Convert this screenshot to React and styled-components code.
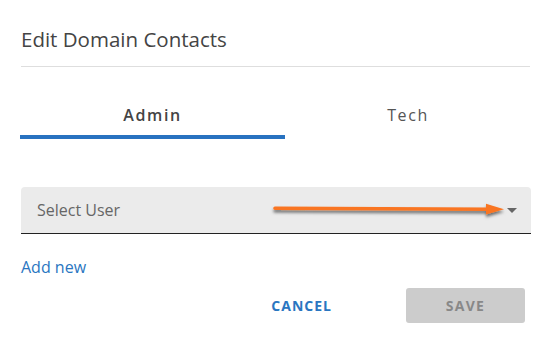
import styled, { createGlobalStyle } from 'styled-components';
import { useState } from 'react';

const GlobalStyle = createGlobalStyle`
  body {
    margin: 0;
    background: #fff;
    font-family: "Open Sans", "Noto Sans", sans-serif;
  }
`;

const tabs = ['Admin', 'Tech'];

function App() {
  const [active, setActive] = useState('Admin');

  return (
    <DIV>
      <GlobalStyle />

      <Title>Edit Domain Contacts</Title>

      <TabRow>
        {tabs.map(tab => (
          <Tab key={tab} $active={tab === active} onClick={() => setActive(tab)}>
            {tab}
          </Tab>
        ))}
      </TabRow>

      <SelectWrap>
        <SelectBox>
          <span>Select User</span>
          <Caret />
        </SelectBox>

        {/* orange annotation arrow drawn over the field */}
        <Pointer width="240" height="16" viewBox="0 0 240 16">
          <defs>
            <filter id="arrow-shadow" x="-5%" y="-80%" width="110%" height="300%">
              <feDropShadow dx="0" dy="2.5" stdDeviation="1.6" floodColor="#000" floodOpacity="0.55" />
            </filter>
          </defs>
          <g filter="url(#arrow-shadow)">
            <path d="M2 6.3 L216 7.2" stroke="#f97522" strokeWidth="3.6" strokeLinecap="round" fill="none" />
            <path d="M213 1.8 L231 7.3 L213 12.4 Z" fill="#f97522" />
          </g>
        </Pointer>
      </SelectWrap>

      <AddLink href="#">Add new</AddLink>

      <Actions>
        <TextButton>CANCEL</TextButton>
        <SaveButton disabled>SAVE</SaveButton>
      </Actions>
    </DIV>
  );
}

const DIV = styled.div`
  width: 551px;
  height: 348px;
  box-sizing: border-box;
  padding: 26px 20px 0 20px;
  background: #fff;
`;

const Title = styled.h2`
  margin: 0 1px;
  padding-bottom: 13px;
  border-bottom: 1px solid #dedede;
  font-size: 20.5px;
  font-weight: 400;
  line-height: 27px;
  color: #444;
`;

const TabRow = styled.div`
  display: flex;
  margin: 27px 0 0 0;
`;

const Tab = styled.div`
  flex: ${p => (p.$active ? '0 0 265px' : '1')};
  height: 45px;
  box-sizing: border-box;
  display: flex;
  align-items: center;
  justify-content: center;
  padding-top: 1px;
  border-bottom: 4px solid ${p => (p.$active ? '#2872c0' : 'transparent')};
  font-size: 16px;
  letter-spacing: 1.6px;
  font-weight: ${p => (p.$active ? 600 : 400)};
  color: ${p => (p.$active ? '#444' : '#555')};
  cursor: pointer;
`;

const SelectWrap = styled.div`
  position: relative;
  margin: 48px 0 0 1px;
`;

const SelectBox = styled.div`
  height: 47px;
  box-sizing: border-box;
  display: flex;
  align-items: center;
  justify-content: space-between;
  padding: 0 14px 0 16px;
  background: #ebebeb;
  border-radius: 4px 4px 0 0;
  border-bottom: 1px solid #222;
  font-size: 16px;
  color: #666;
`;

const Caret = styled.i`
  width: 0;
  height: 0;
  border-left: 5px solid transparent;
  border-right: 5px solid transparent;
  border-top: 5px solid #666;
  margin-top: 1px;
`;

const Pointer = styled.svg`
  position: absolute;
  left: 252px;
  top: 15px;
  overflow: visible;
`;

const AddLink = styled.a`
  display: inline-block;
  margin: 22px 0 0 1px;
  font-size: 16px;
  line-height: 22px;
  color: #2a76c1;
  text-decoration: none;
`;

const Actions = styled.div`
  display: flex;
  justify-content: flex-end;
  align-items: center;
  gap: 74px;
  margin: 10px 6px 0 0;
`;

const TextButton = styled.button`
  border: none;
  background: none;
  padding: 0;
  font-family: inherit;
  font-size: 14px;
  font-weight: 700;
  letter-spacing: 1px;
  color: #2a76c1;
  cursor: pointer;
`;

const SaveButton = styled.button`
  width: 119px;
  height: 35px;
  border: none;
  border-radius: 3px;
  background: #cccccc;
  font-family: inherit;
  font-size: 14px;
  font-weight: 700;
  letter-spacing: 1.3px;
  color: #888;
`;

export default App;
